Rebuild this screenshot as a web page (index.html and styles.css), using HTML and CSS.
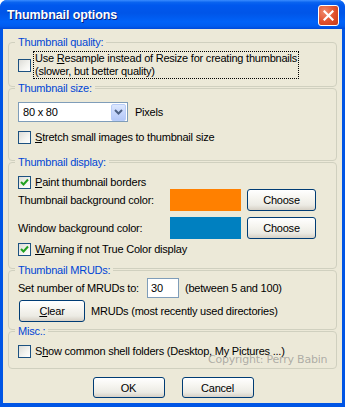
FILE: index.html
```html
<!DOCTYPE html>
<html lang="en">
<head>
<meta charset="UTF-8" />
<title>Thumbnail options</title>
<link rel="stylesheet" href="styles.css">
</head>
<body>
  <div class="window">
    <div class="titlebar">
      <span class="title">Thumbnail options</span>
      <div class="close">
        <svg width="11" height="11" viewBox="0 0 11 11">
          <path d="M1.5 1.5 L9.5 9.5 M9.5 1.5 L1.5 9.5" stroke="#fff" stroke-width="2.2" stroke-linecap="square" fill="none"/>
        </svg>
      </div>
    </div>

    <div class="client">
      <!-- Thumbnail quality -->
      <div class="group g-quality">
        <div class="legend">Thumbnail quality:</div>
        <div class="check-row two-line">
          <span class="cb"></span>
          <span class="label focus">Use <u>R</u>esample instead of Resize for creating thumbnails<br>(slower, but better quality)</span>
        </div>
      </div>

      <!-- Thumbnail size -->
      <div class="group g-size">
        <div class="legend">Thumbnail size:</div>
        <div class="row combo-row">
          <div class="combo">
            <span class="combo-text">80 x 80</span>
            <span class="combo-btn">
              <svg width="9" height="6" viewBox="0 0 9 6">
                <path d="M1 1 L4.5 4.5 L8 1" stroke="#4D6185" stroke-width="2" fill="none"/>
              </svg>
            </span>
          </div>
          <span class="after-combo">Pixels</span>
        </div>
        <div class="check-row stretch-row">
          <span class="cb"></span>
          <span class="label"><u>S</u>tretch small images to thumbnail size</span>
        </div>
      </div>

      <!-- Thumbnail display -->
      <div class="group g-display">
        <div class="legend">Thumbnail display:</div>
        <div class="check-row paint-row">
          <span class="cb checked">
            <svg width="9" height="9" viewBox="0 0 9 9">
              <path d="M1 4 L3.5 6.5 L8 1.5" stroke="#21A121" stroke-width="2" fill="none"/>
            </svg>
          </span>
          <span class="label"><u>P</u>aint thumbnail borders</span>
        </div>
        <div class="row color-row">
          <span class="color-label">Thumbnail background color:</span>
          <span class="swatch orange"></span>
          <button class="xp-btn choose">Choose</button>
        </div>
        <div class="row color-row second">
          <span class="color-label">Window background color:</span>
          <span class="swatch blue"></span>
          <button class="xp-btn choose">Choose</button>
        </div>
        <div class="check-row warn-row">
          <span class="cb checked">
            <svg width="9" height="9" viewBox="0 0 9 9">
              <path d="M1 4 L3.5 6.5 L8 1.5" stroke="#21A121" stroke-width="2" fill="none"/>
            </svg>
          </span>
          <span class="label"><u>W</u>arning if not True Color display</span>
        </div>
      </div>

      <!-- Thumbnail MRUDs -->
      <div class="group g-mruds">
        <div class="legend">Thumbnail MRUDs:</div>
        <div class="row edit-row">
          <span class="edit-label">Set number of MRUDs to:</span>
          <span class="edit">30</span>
          <span class="after-edit">(between 5 and 100)</span>
        </div>
        <div class="row clear-row">
          <button class="xp-btn clear"><u>C</u>lear</button>
          <span class="after-clear">MRUDs (most recently used directories)</span>
        </div>
      </div>

      <!-- Misc -->
      <div class="group g-misc">
        <div class="legend">Misc.:</div>
        <div class="check-row shell-row">
          <span class="cb"></span>
          <span class="label">S<u>h</u>ow common shell folders (Desktop, My Pictures ...)</span>
        </div>
      </div>

      <div class="dialog-buttons">
        <button class="xp-btn wide">OK</button>
        <button class="xp-btn wide">Cancel</button>
      </div>
    </div>
  </div>

  <div class="watermark">Copyright: Perry Babin</div>
</body>
</html>
```

FILE: styles.css
```css
body {
  margin: 0;
  width: 345px;
  height: 407px;
  overflow: hidden;
  position: relative;
  background: #fff;
  font-family: "Liberation Sans", Arial, sans-serif;
  font-size: 11px;
  line-height: 13px;
  letter-spacing: -0.22px;
  color: #000;
}

.window {
  width: 345px;
  height: 407px;
  display: flex;
  flex-direction: column;
  border-radius: 7px 7px 0 0;
  overflow: hidden;
  background: #0055E5;
}

/* Title bar */
.titlebar {
  height: 29px;
  flex: none;
  display: flex;
  align-items: center;
  justify-content: space-between;
  padding: 0 6px 0 7px;
  background: linear-gradient(to bottom,
    #3A8CFF 0%, #0A64F0 8%, #0058EE 18%, #0055E8 45%,
    #0062F8 75%, #005CF0 90%, #0049D8 100%);
}
.title {
  color: #fff;
  font-weight: bold;
  font-size: 12.5px;
  letter-spacing: -0.1px;
  text-shadow: 1px 1px 0 #0A1E7A;
  padding-top: 1px;
}
.close {
  width: 19px;
  height: 19px;
  border: 1px solid #fff;
  border-radius: 3px;
  display: flex;
  align-items: center;
  justify-content: center;
  background: radial-gradient(circle at 30% 30%, #F08A6C 0%, #E0502C 55%, #C83A18 100%);
  margin-top: 1px;
}

/* Client area */
.client {
  flex: 1;
  margin: 0 3px 4px;
  background: #ECE9D8;
  padding-top: 13px;
}

.group {
  margin: 0 5px;
  border: 1px solid #D0D0BF;
  border-radius: 4px;
  padding: 0 9px;
}
.legend {
  width: max-content;
  height: 13px;
  margin: -7px 0 0 -3px;
  padding: 0 3px;
  background: #ECE9D8;
  color: #0046D5;
}

.g-quality { padding-bottom: 7px; }
.g-size { margin-top: 1px; padding-bottom: 16px; }
.g-display { margin-top: 1px; padding-bottom: 12px; }
.g-mruds { margin-top: 1px; padding-bottom: 7px; }
.g-misc { margin-top: 1px; padding-bottom: 10px; }

/* Checkbox rows */
.check-row {
  display: flex;
  align-items: center;
  height: 13px;
}
.check-row.two-line {
  height: 28px;
  margin-top: 2px;
}
.stretch-row { margin-top: 9px; }
.paint-row { margin-top: 7px; }
.warn-row { margin-top: 4px; }
.shell-row { margin-top: 7px; }

.cb {
  width: 11px;
  height: 11px;
  flex: none;
  border: 1px solid #1C5180;
  background: linear-gradient(135deg, #DCDCD7 0%, #F4F4F0 60%, #FFFFFF 100%);
  display: flex;
  align-items: center;
  justify-content: center;
}
.label {
  margin-left: 2px;
  padding: 0 1px;
  border: 1px solid transparent;
  white-space: nowrap;
}
.label.focus {
  border: 1px dotted #000;
}

/* Generic rows */
.row {
  display: flex;
  align-items: center;
}
.combo-row { margin-top: 7px; }
.combo {
  width: 108px;
  height: 18px;
  border: 1px solid #7F9DB9;
  background: #fff;
  display: flex;
  align-items: center;
  justify-content: space-between;
}
.combo-text { padding-left: 4px; }
.combo-btn {
  width: 13px;
  height: 15px;
  margin-right: 1px;
  border: 1px solid #B9CDF9;
  border-radius: 2px;
  background: linear-gradient(to bottom, #DDE8FE 0%, #C6D6FC 50%, #B4C8F8 100%);
  display: flex;
  align-items: center;
  justify-content: center;
}
.after-combo { margin-left: 7px; }

.color-row { height: 22px; }
.color-row.second { margin-top: 6px; }
.color-label { width: 152px; }
.swatch {
  width: 71px;
  height: 22px;
}
.swatch.orange { background: #FF8000; }
.swatch.blue { background: #0080C0; }

.xp-btn {
  font-family: "Liberation Sans", Arial, sans-serif;
  font-size: 11px;
  letter-spacing: -0.22px;
  color: #000;
  border: 1px solid #003C74;
  border-radius: 3px;
  background: linear-gradient(to bottom, #FFFFFF 0%, #F6F5F0 40%, #ECEBE4 75%, #D6D0C5 100%);
  padding: 0;
  margin: 0;
}
.choose {
  width: 69px;
  height: 22px;
  margin-left: 6px;
}

.edit-row { margin-top: 1px; }
.edit-label { width: 129px; }
.edit {
  width: 27px;
  height: 18px;
  line-height: 18px;
  border: 1px solid #7F9DB9;
  background: #fff;
  padding-left: 3px;
}
.after-edit { margin-left: 6px; }

.clear-row { margin-top: 2px; }
.clear {
  width: 66px;
  height: 22px;
  margin-left: 1px;
}
.after-clear { margin-left: 6px; }

.dialog-buttons {
  display: flex;
  justify-content: center;
  gap: 17px;
  margin-top: 8px;
  padding-left: 1px;
}
.wide {
  width: 72px;
  height: 21px;
}

.watermark {
  position: absolute;
  left: 208px;
  top: 353px;
  font-family: "DejaVu Sans", Verdana, sans-serif;
  font-size: 11px;
  color: rgba(130, 130, 130, 0.6);
  white-space: nowrap;
}
```
